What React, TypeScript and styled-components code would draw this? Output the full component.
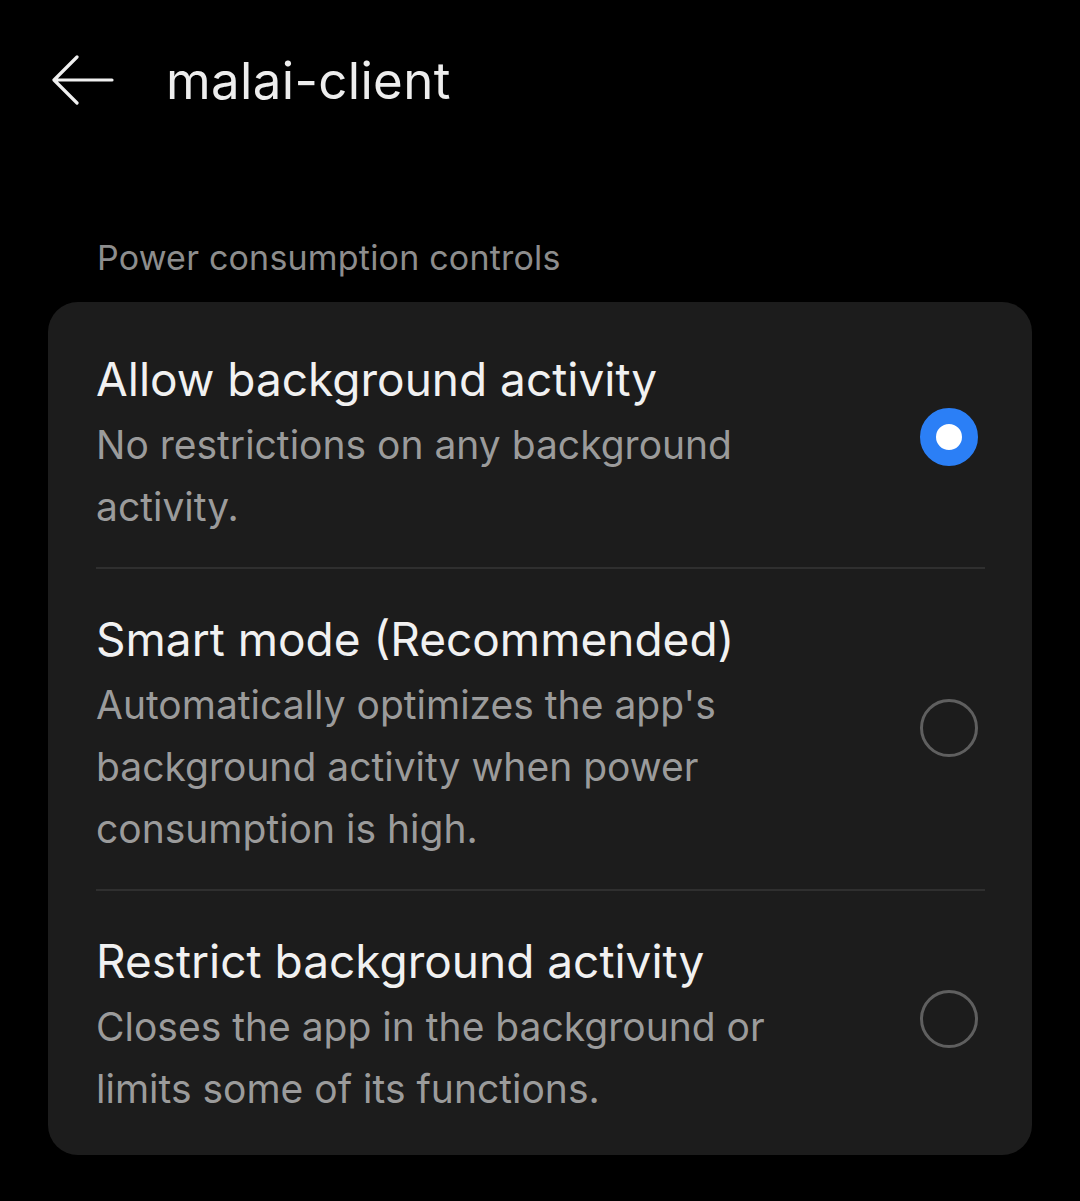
import { createGlobalStyle } from 'styled-components';
import styled from 'styled-components';

const GlobalStyle = createGlobalStyle`
    html, body {
        margin: 0;
        padding: 0;
        background: #000;
    }
    body {
        font-family: Inter, Roboto, "Noto Sans", sans-serif;
        -webkit-font-smoothing: antialiased;
    }
`;

const Page = styled.div`
    width: 1080px;
    min-height: 1201px;
    background: #000;
    padding: 0 48px;
    box-sizing: border-box;
`;

const Header = styled.header`
    display: flex;
    align-items: center;
    height: 160px;
    gap: 52px;

    .back {
        display: flex;
        margin-left: 4px;
        color: #f0f0f0;
    }
    .title {
        font-size: 51px;
        font-weight: 400;
        color: #ededed;
        letter-spacing: 0.35px;
    }
`;

const SectionLabel = styled.div`
    padding: 76px 0 0 49px;
    height: 66px;
    font-size: 34px;
    line-height: 44px;
    color: #8d8d8d;
    letter-spacing: 0.2px;
`;

const Card = styled.section`
    background: #1c1c1c;
    border-radius: 30px;
    padding: 7px 0 6px;
`;

const Row = styled.div`
    display: flex;
    align-items: center;
    padding: 35px 54px 29px 48px;
    cursor: pointer;

    .text {
        flex: 1;
        max-width: 700px;
    }
    .name {
        font-size: 46px;
        line-height: 70px;
        color: #f1f1f1;
    }
    .desc {
        font-size: 39px;
        line-height: 62px;
        color: #9b9b9b;
    }
`;

const Divider = styled.div`
    height: 2px;
    margin: 0 47px 0 48px;
    background: #2f2f2f;
`;

const Radio = styled.span<{ $on?: boolean }>`
    margin-left: auto;
    margin-bottom: 8px;
    width: 58px;
    height: 58px;
    border-radius: 50%;
    box-sizing: border-box;
    flex-shrink: 0;
    border: ${(p) => (p.$on ? '16px solid #2b7ff6' : '3px solid #5f5f5f')};
    background: ${(p) => (p.$on ? '#fff' : 'transparent')};
`;

const options = [
    {
        name: 'Allow background activity',
        desc: 'No restrictions on any background activity.',
    },
    {
        name: 'Smart mode (Recommended)',
        desc: "Automatically optimizes the app's background activity when power consumption is high.",
    },
    {
        name: 'Restrict background activity',
        desc: 'Closes the app in the background or limits some of its functions.',
    },
];

const App = () => {
    const selected = 0;

    return (
        <Page>
            <GlobalStyle />
            <Header>
                <span className="back">
                    <svg width="62" height="50" viewBox="0 0 62 50" fill="none">
                        <path d="M60 25H3M25 2L2 25l23 23" stroke="#f0f0f0" strokeWidth="3.2" strokeLinecap="round" strokeLinejoin="round" />
                    </svg>
                </span>
                <span className="title">malai-client</span>
            </Header>
            <SectionLabel>Power consumption controls</SectionLabel>
            <Card>
                {options.map((o, i) => (
                    <div key={o.name}>
                        {i > 0 && <Divider />}
                        <Row>
                            <div className="text">
                                <div className="name">{o.name}</div>
                                <div className="desc">{o.desc}</div>
                            </div>
                            <Radio $on={i === selected} />
                        </Row>
                    </div>
                ))}
            </Card>
        </Page>
    );
};

export default App;
